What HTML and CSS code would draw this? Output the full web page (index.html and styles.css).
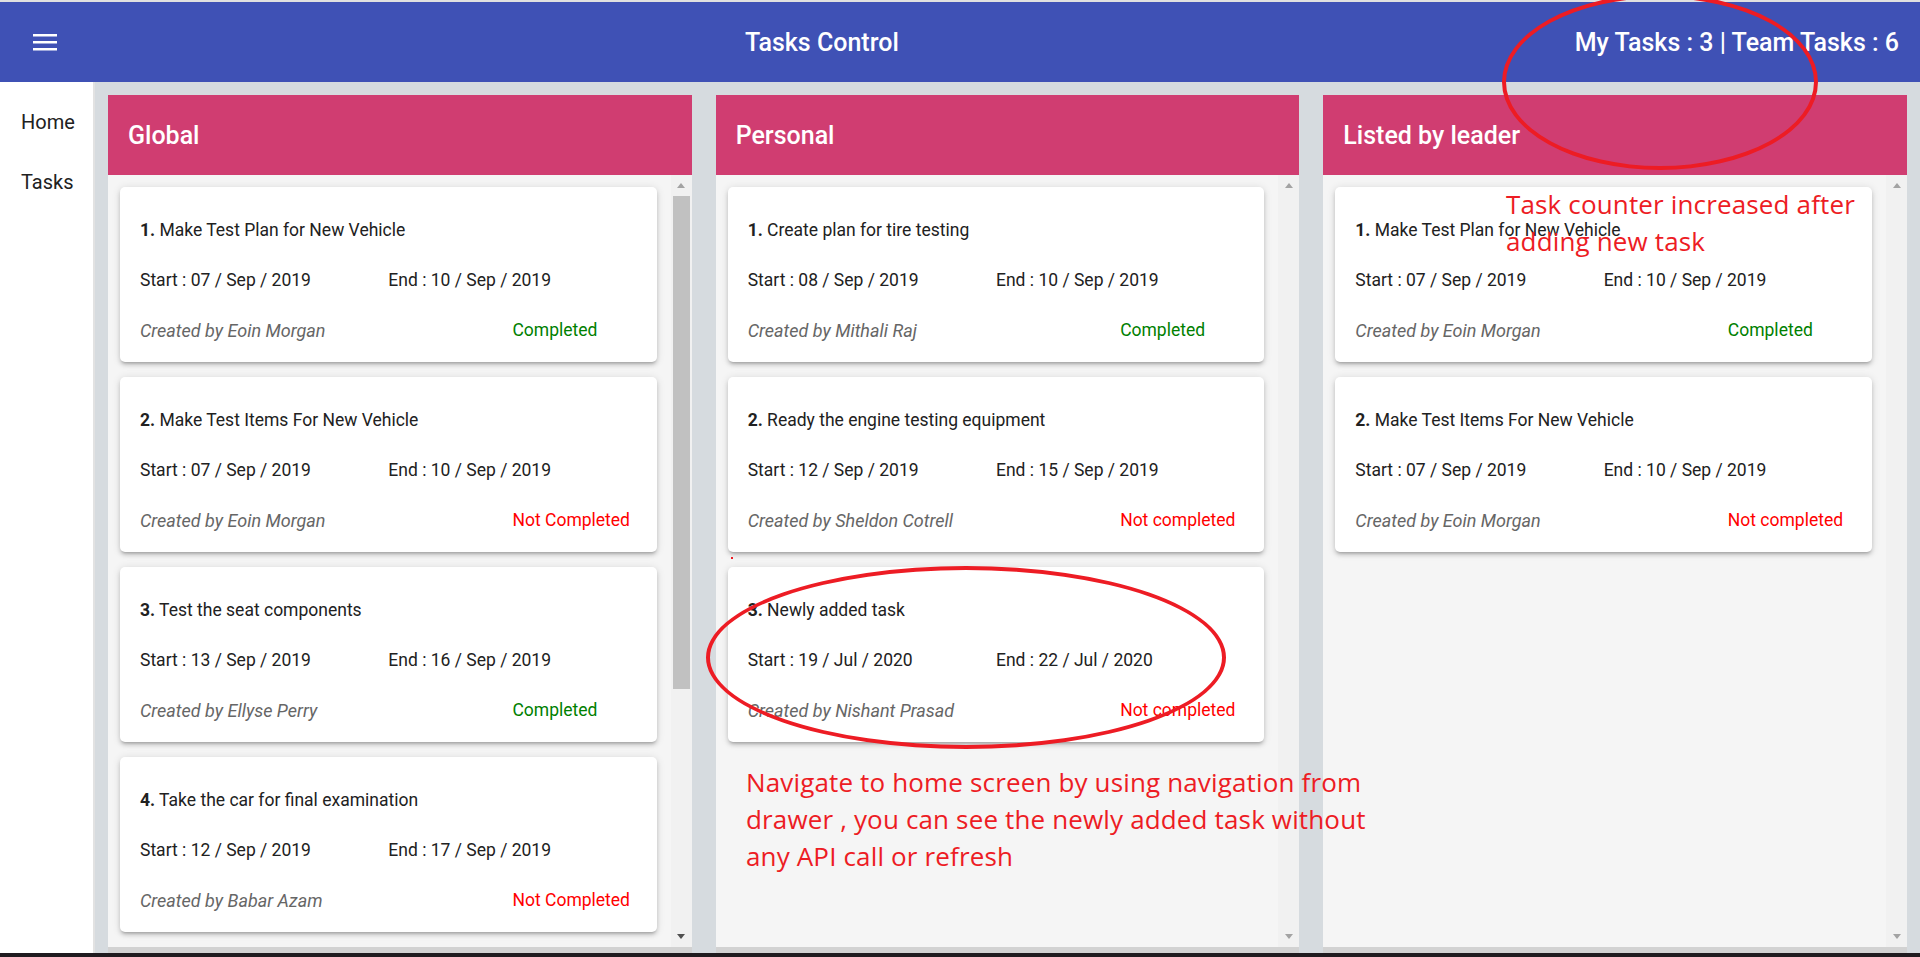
FILE: index.html
```html
<!DOCTYPE html>
<html lang="en">
<head>
<meta charset="utf-8">
<title>Tasks Control</title>
<link rel="stylesheet" href="styles.css">
</head>
<body>
<div class="topline"></div>
<header class="toolbar">
  <button class="menu-btn" aria-label="menu">
    <svg width="24" height="17" viewBox="0 0 24 17"><rect x="0" y="0" width="24" height="2.5" fill="#fff"/><rect x="0" y="7" width="24" height="2.5" fill="#fff"/><rect x="0" y="14" width="24" height="2.5" fill="#fff"/></svg>
  </button>
  <div class="title">Tasks Control</div>
  <div class="counter">My Tasks : 3 | Team Tasks : 6</div>
</header>
<div class="main">
  <nav class="sidebar">
    <div class="nav-item">Home</div>
    <div class="nav-item">Tasks</div>
  </nav>
  <section class="board">
    <div class="column">
      <div class="col-head">Global</div>
      <div class="col-body">
        <div class="list">
          <div class="card">
            <div class="row row-title"><span><b class="num">1.</b> Make Test Plan for New Vehicle</span></div>
            <div class="row row-dates"><span>Start : 07 / Sep / 2019</span><span>End : 10 / Sep / 2019</span></div>
            <div class="row row-meta"><span class="creator">Created by Eoin Morgan</span><span class="done">Completed</span></div>
          </div>
          <div class="card">
            <div class="row row-title"><span><b class="num">2.</b> Make Test Items For New Vehicle</span></div>
            <div class="row row-dates"><span>Start : 07 / Sep / 2019</span><span>End : 10 / Sep / 2019</span></div>
            <div class="row row-meta"><span class="creator">Created by Eoin Morgan</span><span class="todo">Not Completed</span></div>
          </div>
          <div class="card">
            <div class="row row-title"><span><b class="num">3.</b> Test the seat components</span></div>
            <div class="row row-dates"><span>Start : 13 / Sep / 2019</span><span>End : 16 / Sep / 2019</span></div>
            <div class="row row-meta"><span class="creator">Created by Ellyse Perry</span><span class="done">Completed</span></div>
          </div>
          <div class="card">
            <div class="row row-title"><span><b class="num">4.</b> Take the car for final examination</span></div>
            <div class="row row-dates"><span>Start : 12 / Sep / 2019</span><span>End : 17 / Sep / 2019</span></div>
            <div class="row row-meta"><span class="creator">Created by Babar Azam</span><span class="todo">Not Completed</span></div>
          </div>
        </div>
        <div class="scrollbar">
          <div class="sb-btn"><span class="arrow-up"></span></div>
          <div class="sb-track"><div class="thumb"></div></div>
          <div class="sb-btn"><span class="arrow-down active"></span></div>
        </div>
      </div>
    </div>

    <div class="column">
      <div class="col-head">Personal</div>
      <div class="col-body">
        <div class="list">
          <div class="card">
            <div class="row row-title"><span><b class="num">1.</b> Create plan for tire testing</span></div>
            <div class="row row-dates"><span>Start : 08 / Sep / 2019</span><span>End : 10 / Sep / 2019</span></div>
            <div class="row row-meta"><span class="creator">Created by Mithali Raj</span><span class="done">Completed</span></div>
          </div>
          <div class="card">
            <div class="row row-title"><span><b class="num">2.</b> Ready the engine testing equipment</span></div>
            <div class="row row-dates"><span>Start : 12 / Sep / 2019</span><span>End : 15 / Sep / 2019</span></div>
            <div class="row row-meta"><span class="creator">Created by Sheldon Cotrell</span><span class="todo">Not completed</span></div>
          </div>
          <div class="card">
            <div class="row row-title"><span><b class="num">3.</b> Newly added task</span></div>
            <div class="row row-dates"><span>Start : 19 / Jul / 2020</span><span>End : 22 / Jul / 2020</span></div>
            <div class="row row-meta"><span class="creator">Created by Nishant Prasad</span><span class="todo">Not completed</span></div>
          </div>
        </div>
        <div class="scrollbar">
          <div class="sb-btn"><span class="arrow-up"></span></div>
          <div class="sb-track"></div>
          <div class="sb-btn"><span class="arrow-down"></span></div>
        </div>
      </div>
    </div>

    <div class="column">
      <div class="col-head">Listed by leader</div>
      <div class="col-body">
        <div class="list">
          <div class="card">
            <div class="row row-title"><span><b class="num">1.</b> Make Test Plan for New Vehicle</span></div>
            <div class="row row-dates"><span>Start : 07 / Sep / 2019</span><span>End : 10 / Sep / 2019</span></div>
            <div class="row row-meta"><span class="creator">Created by Eoin Morgan</span><span class="done">Completed</span></div>
          </div>
          <div class="card">
            <div class="row row-title"><span><b class="num">2.</b> Make Test Items For New Vehicle</span></div>
            <div class="row row-dates"><span>Start : 07 / Sep / 2019</span><span>End : 10 / Sep / 2019</span></div>
            <div class="row row-meta"><span class="creator">Created by Eoin Morgan</span><span class="todo">Not completed</span></div>
          </div>
        </div>
        <div class="scrollbar">
          <div class="sb-btn"><span class="arrow-up"></span></div>
          <div class="sb-track"></div>
          <div class="sb-btn"><span class="arrow-down"></span></div>
        </div>
      </div>
    </div>
  </section>
</div>
<div class="taskbar"></div>

<div class="ring ring-top"></div>
<div class="ring ring-mid"></div>
<div class="dot"></div>
<div class="note note-counter">Task counter increased after<br>adding new task</div>
<div class="note note-nav">Navigate to home screen by using navigation from<br>drawer , you can see the newly added task without<br>any API call or refresh</div>
</body>
</html>
```

FILE: styles.css
```css
* { box-sizing: border-box; }
html, body { margin: 0; padding: 0; }
body {
  font-family: Roboto, "Liberation Sans", Arial, sans-serif;
  background: #d6dbdf;
  width: 1920px;
  height: 957px;
  overflow: hidden;
  position: relative;
}
.topline { height: 2px; background: #e0e0e0; }
.toolbar {
  height: 80px;
  background: #3f51b5;
  color: #fff;
  display: flex;
  align-items: center;
  padding: 0 21px;
}
.menu-btn {
  width: 48px; height: 48px;
  display: flex; align-items: center; justify-content: center;
  background: none; border: 0; padding: 0; margin-top: 1px;
}
.menu-btn svg { display: block; }
.title { flex: 1; text-align: center; font-size: 25px; font-weight: 500; }
.counter { font-size: 25px; font-weight: 500; }

.main { display: flex; height: 871px; }
.sidebar {
  width: 95px; flex: none;
  background: #fff;
  border-right: 2px solid #e2e2e2;
  padding-top: 10px;
}
.nav-item {
  height: 60px;
  display: flex; align-items: center;
  padding-left: 21px;
  font-size: 20px;
  color: #212121;
}
.board {
  flex: 1;
  display: grid;
  grid-template-columns: repeat(3, 1fr);
  gap: 24px;
  padding: 13px 13px 0;
  min-width: 0;
}
.column {
  display: flex; flex-direction: column;
  border-bottom: 6px solid #d2d2d2;
  min-height: 0; min-width: 0;
}
.col-head {
  height: 80px; flex: none;
  background: #d03d71;
  color: #fff;
  font-size: 25px; font-weight: 500;
  display: flex; align-items: center;
  padding-left: 20px;
}
.col-body { flex: 1; display: flex; background: #f5f5f5; min-height: 0; }
.list {
  flex: 1; min-width: 0;
  overflow: hidden;
  padding: 12px 14px 0 12px;
  display: flex; flex-direction: column; gap: 15px;
}
.card {
  flex: none;
  height: 175px;
  background: #fff;
  border-radius: 5px;
  box-shadow: 0 3px 3px -2px rgba(0,0,0,.2), 0 3px 4px 0 rgba(0,0,0,.14), 0 1px 8px 0 rgba(0,0,0,.12);
  padding: 18px 20px 7px;
  display: flex; flex-direction: column;
}
.row {
  height: 50px;
  display: grid;
  align-items: center;
  font-size: 17.5px;
  color: #212121;
  white-space: nowrap;
}
.row-title { grid-template-columns: 1fr; }
.row-dates { grid-template-columns: 1fr 1fr; }
.row-meta { grid-template-columns: 3fr 1fr; }
.num { font-weight: 700; }
.creator { font-style: italic; color: #666; font-size: 18px; }
.done { color: #008000; }
.todo { color: #ff0000; }

.scrollbar { width: 21px; flex: none; background: #f1f1f1; display: flex; flex-direction: column; }
.sb-btn { height: 21px; flex: none; display: flex; align-items: center; justify-content: center; }
.sb-track { flex: 1; padding: 0 2px; }
.thumb { height: 493px; background: #c1c1c1; }
.arrow-up {
  width: 0; height: 0;
  border-left: 4.5px solid transparent;
  border-right: 4.5px solid transparent;
  border-bottom: 5px solid #a3a3a3;
}
.arrow-down {
  width: 0; height: 0;
  border-left: 4.5px solid transparent;
  border-right: 4.5px solid transparent;
  border-top: 5px solid #a3a3a3;
}
.arrow-down.active { border-top-color: #505050; }

.taskbar { height: 4px; background: #201b1f; }

.ring {
  position: absolute;
  border: 4px solid #ed1c24;
  border-radius: 50%;
}
.ring-top { left: 1502px; top: -6px; width: 316px; height: 176px; }
.ring-mid { left: 706px; top: 566px; width: 520px; height: 183px; }
.dot { position: absolute; left: 731px; top: 557px; width: 2px; height: 2px; background: #ed1c24; }
.note {
  position: absolute;
  color: #ed1c24;
  font-family: "Open Sans", "Noto Sans", sans-serif;
  font-size: 26px;
  line-height: 37px;
  letter-spacing: 0.15px;
  white-space: nowrap;
}
.note-counter { left: 1506px; top: 186px; }
.note-nav { left: 746px; top: 764px; }
```
